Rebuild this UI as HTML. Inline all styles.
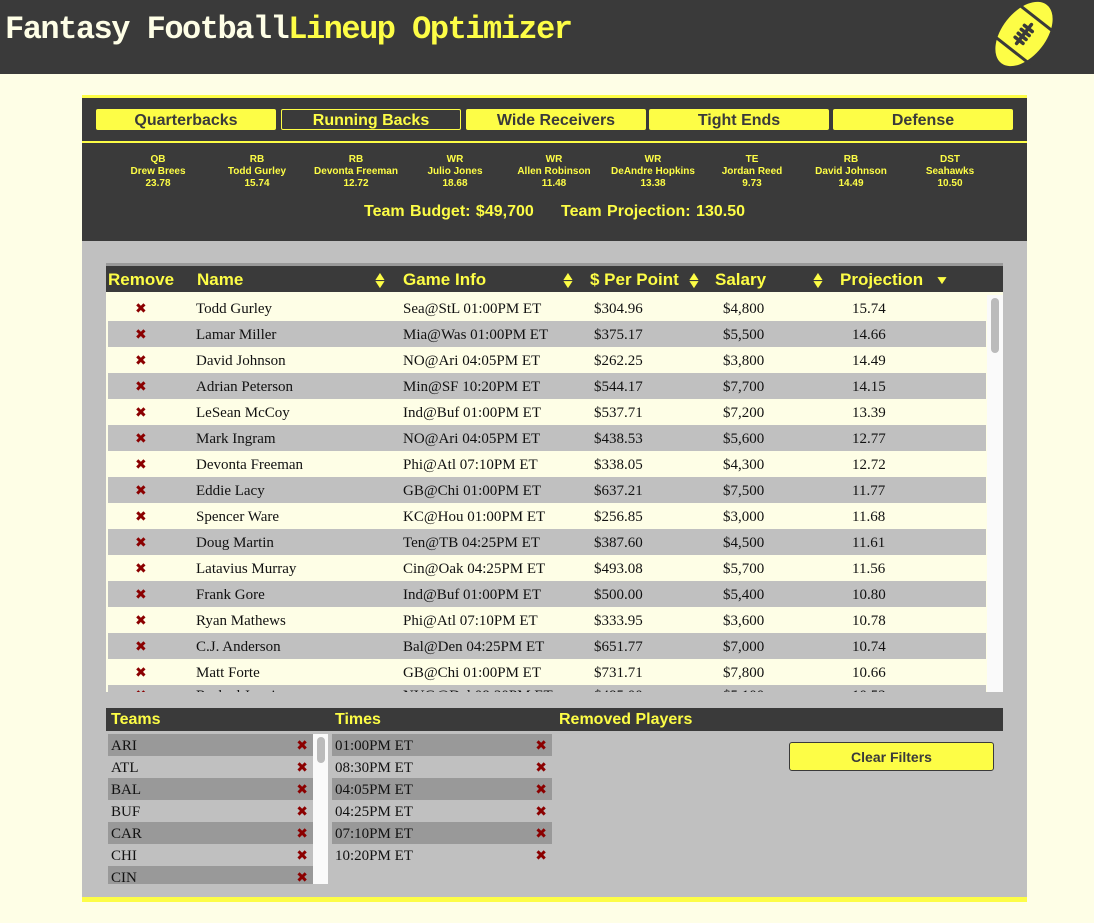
<!DOCTYPE html>
<html><head><meta charset="utf-8"><style>
*{margin:0;padding:0;box-sizing:border-box}
body{width:1094px;height:923px;background:#fefee6;position:relative;overflow:hidden;font-family:"Liberation Sans",sans-serif}
.abs{position:absolute}
#hdr{left:0;top:0;width:1094px;height:74px;background:#3a3a3a}
#title{left:5px;top:11px;font-family:"Liberation Mono",monospace;font-weight:bold;font-size:32px;letter-spacing:-1.5px;color:#fefee6;white-space:nowrap}
#title span{color:#fdfd46}
#main{left:82px;top:95px;width:945px;height:807px;background:#c0c0c0;border-top:3px solid #fdfd46;border-bottom:5px solid #fdfd46}
#dark{left:82px;top:98px;width:945px;height:143px;background:#3a3a3a}
.tab{top:109px;height:21px;width:180px;background:#fdfd46;color:#3a3a3a;font-weight:bold;font-size:16px;text-align:center;line-height:23px;border-radius:2px}
.tab.on{background:#3a3a3a;color:#fdfd46;border:1px solid #fdfd46;line-height:21px}
#line{left:82px;top:141px;width:945px;height:2px;background:#fdfd46}
.pl{top:154px;width:100px;text-align:center;color:#fdfd46;font-weight:bold;font-size:10px;line-height:12px;white-space:nowrap}
#tot{left:82px;top:203px;width:945px;text-align:center;color:#fdfd46;font-weight:bold;font-size:16px;word-spacing:1px}
#tbl{left:106px;top:263px;width:897px;height:429px;background:#fefee6;border-top:3px solid #999;overflow:hidden}
#th{left:0;top:0;width:897px;height:26px;background:#3a3a3a}
.h{top:4px;color:#fdfd46;font-weight:bold;font-size:17px}
.s{color:#fdfd46;font-size:12px;line-height:8px;transform:scaleX(1.3)}
.row{left:2px;width:878px;height:26px;font-family:"Liberation Serif",serif;font-size:15px;color:#111;line-height:28px}
.row.g{background:#c0c0c0}
.row span{position:absolute}
.x{color:#8b0000;font-weight:bold;font-family:"DejaVu Sans",sans-serif;font-size:14px}
#sb{left:881px;top:29px;width:16px;height:400px;background:#fafafa}
#sbt{left:885px;top:32px;width:8px;height:55px;background:#bbb;border-radius:4px}
#bh{left:106px;top:708px;width:897px;height:23px;background:#3a3a3a}
.bh{top:711px;color:#fdfd46;font-weight:bold;font-size:16px}
.li{height:22px;font-family:"Liberation Serif",serif;font-size:15px;line-height:24px;color:#111}
.li.d{background:#999}
.li span{position:absolute;left:3px}
.li b{position:absolute;right:5px;color:#8b0000;font-family:"DejaVu Sans",sans-serif;font-size:14px}
#btn{left:789px;top:742px;width:205px;height:29px;background:#fdfd46;border:1px solid #3a3a3a;border-radius:3px;text-align:center;line-height:29px;font-weight:bold;font-size:14px;color:#3a3a3a}
</style></head><body>
<div id="hdr" class="abs"></div>
<div id="title" class="abs">Fantasy Football<span>Lineup Optimizer</span></div>
<svg class="abs" style="left:988px;top:0px" width="72" height="68" viewBox="0 0 72 68">
<g transform="rotate(-52 36 34)">
<ellipse cx="36" cy="34" rx="37" ry="22" fill="#fdfd46"/>
<line x1="16" y1="10" x2="16" y2="58" stroke="#3a3a3a" stroke-width="3"/>
<line x1="56" y1="10" x2="56" y2="58" stroke="#3a3a3a" stroke-width="3"/>
<g stroke="#3a3a3a" stroke-width="3.5" stroke-linecap="round"><line x1="24" y1="34" x2="48" y2="34"/><line x1="28" y1="29" x2="28" y2="39"/><line x1="33" y1="29" x2="33" y2="39"/><line x1="38" y1="29" x2="38" y2="39"/><line x1="43" y1="29" x2="43" y2="39"/></g>
</g></svg>
<div id="main" class="abs"></div>
<div id="dark" class="abs"></div>
<div class="abs tab" style="left:96px">Quarterbacks</div>
<div class="abs tab on" style="left:281px">Running Backs</div>
<div class="abs tab" style="left:466px">Wide Receivers</div>
<div class="abs tab" style="left:649px">Tight Ends</div>
<div class="abs tab" style="left:833px">Defense</div>
<div id="line" class="abs"></div>
<div class="abs pl" style="left:108px">QB<br>Drew Brees<br>23.78</div>
<div class="abs pl" style="left:207px">RB<br>Todd Gurley<br>15.74</div>
<div class="abs pl" style="left:306px">RB<br>Devonta Freeman<br>12.72</div>
<div class="abs pl" style="left:405px">WR<br>Julio Jones<br>18.68</div>
<div class="abs pl" style="left:504px">WR<br>Allen Robinson<br>11.48</div>
<div class="abs pl" style="left:603px">WR<br>DeAndre Hopkins<br>13.38</div>
<div class="abs pl" style="left:702px">TE<br>Jordan Reed<br>9.73</div>
<div class="abs pl" style="left:801px">RB<br>David Johnson<br>14.49</div>
<div class="abs pl" style="left:900px">DST<br>Seahawks<br>10.50</div>
<div id="tot" class="abs">Team Budget: $49,700 &nbsp;&nbsp;&nbsp; Team Projection: 130.50</div>

<div id="tbl" class="abs">
<div id="th" class="abs"></div>
<div class="abs h" style="left:2px">Remove</div>
<div class="abs h" style="left:91px">Name</div><div class="abs s" style="left:268px;top:6px">▲<br>▼</div>
<div class="abs h" style="left:297px">Game Info</div><div class="abs s" style="left:456px;top:6px">▲<br>▼</div>
<div class="abs h" style="left:484px">$ Per Point</div><div class="abs s" style="left:582px;top:6px">▲<br>▼</div>
<div class="abs h" style="left:609px">Salary</div><div class="abs s" style="left:706px;top:6px">▲<br>▼</div>
<div class="abs h" style="left:734px">Projection</div><div class="abs s" style="left:830px;top:10px">▼</div>

<div class="abs row" style="top:29px"><span class="x" style="left:27px">✖</span><span style="left:88px">Todd Gurley</span><span style="left:295px">Sea@StL 01:00PM ET</span><span style="left:486px">$304.96</span><span style="left:615px">$4,800</span><span style="left:744px">15.74</span></div>
<div class="abs row g" style="top:55px"><span class="x" style="left:27px">✖</span><span style="left:88px">Lamar Miller</span><span style="left:295px">Mia@Was 01:00PM ET</span><span style="left:486px">$375.17</span><span style="left:615px">$5,500</span><span style="left:744px">14.66</span></div>
<div class="abs row" style="top:81px"><span class="x" style="left:27px">✖</span><span style="left:88px">David Johnson</span><span style="left:295px">NO@Ari 04:05PM ET</span><span style="left:486px">$262.25</span><span style="left:615px">$3,800</span><span style="left:744px">14.49</span></div>
<div class="abs row g" style="top:107px"><span class="x" style="left:27px">✖</span><span style="left:88px">Adrian Peterson</span><span style="left:295px">Min@SF 10:20PM ET</span><span style="left:486px">$544.17</span><span style="left:615px">$7,700</span><span style="left:744px">14.15</span></div>
<div class="abs row" style="top:133px"><span class="x" style="left:27px">✖</span><span style="left:88px">LeSean McCoy</span><span style="left:295px">Ind@Buf 01:00PM ET</span><span style="left:486px">$537.71</span><span style="left:615px">$7,200</span><span style="left:744px">13.39</span></div>
<div class="abs row g" style="top:159px"><span class="x" style="left:27px">✖</span><span style="left:88px">Mark Ingram</span><span style="left:295px">NO@Ari 04:05PM ET</span><span style="left:486px">$438.53</span><span style="left:615px">$5,600</span><span style="left:744px">12.77</span></div>
<div class="abs row" style="top:185px"><span class="x" style="left:27px">✖</span><span style="left:88px">Devonta Freeman</span><span style="left:295px">Phi@Atl 07:10PM ET</span><span style="left:486px">$338.05</span><span style="left:615px">$4,300</span><span style="left:744px">12.72</span></div>
<div class="abs row g" style="top:211px"><span class="x" style="left:27px">✖</span><span style="left:88px">Eddie Lacy</span><span style="left:295px">GB@Chi 01:00PM ET</span><span style="left:486px">$637.21</span><span style="left:615px">$7,500</span><span style="left:744px">11.77</span></div>
<div class="abs row" style="top:237px"><span class="x" style="left:27px">✖</span><span style="left:88px">Spencer Ware</span><span style="left:295px">KC@Hou 01:00PM ET</span><span style="left:486px">$256.85</span><span style="left:615px">$3,000</span><span style="left:744px">11.68</span></div>
<div class="abs row g" style="top:263px"><span class="x" style="left:27px">✖</span><span style="left:88px">Doug Martin</span><span style="left:295px">Ten@TB 04:25PM ET</span><span style="left:486px">$387.60</span><span style="left:615px">$4,500</span><span style="left:744px">11.61</span></div>
<div class="abs row" style="top:289px"><span class="x" style="left:27px">✖</span><span style="left:88px">Latavius Murray</span><span style="left:295px">Cin@Oak 04:25PM ET</span><span style="left:486px">$493.08</span><span style="left:615px">$5,700</span><span style="left:744px">11.56</span></div>
<div class="abs row g" style="top:315px"><span class="x" style="left:27px">✖</span><span style="left:88px">Frank Gore</span><span style="left:295px">Ind@Buf 01:00PM ET</span><span style="left:486px">$500.00</span><span style="left:615px">$5,400</span><span style="left:744px">10.80</span></div>
<div class="abs row" style="top:341px"><span class="x" style="left:27px">✖</span><span style="left:88px">Ryan Mathews</span><span style="left:295px">Phi@Atl 07:10PM ET</span><span style="left:486px">$333.95</span><span style="left:615px">$3,600</span><span style="left:744px">10.78</span></div>
<div class="abs row g" style="top:367px"><span class="x" style="left:27px">✖</span><span style="left:88px">C.J. Anderson</span><span style="left:295px">Bal@Den 04:25PM ET</span><span style="left:486px">$651.77</span><span style="left:615px">$7,000</span><span style="left:744px">10.74</span></div>
<div class="abs row" style="top:393px"><span class="x" style="left:27px">✖</span><span style="left:88px">Matt Forte</span><span style="left:295px">GB@Chi 01:00PM ET</span><span style="left:486px">$731.71</span><span style="left:615px">$7,800</span><span style="left:744px">10.66</span></div>
<div class="abs row g" style="top:419px;line-height:22px"><span class="x" style="left:27px">✖</span><span style="left:88px">Rashad Jennings</span><span style="left:295px">NYG@Dal 08:30PM ET</span><span style="left:486px">$485.00</span><span style="left:615px">$5,100</span><span style="left:744px">10.52</span></div>
<div id="sb" class="abs"></div><div id="sbt" class="abs"></div>
</div>

<div id="bh" class="abs"></div>
<div class="abs bh" style="left:111px">Teams</div>
<div class="abs bh" style="left:335px">Times</div>
<div class="abs bh" style="left:559px">Removed Players</div>

<div class="abs" style="left:108px;top:734px;width:205px;height:150px;overflow:hidden">
<div class="li d"><span>ARI</span><b>✖</b></div>
<div class="li"><span>ATL</span><b>✖</b></div>
<div class="li d"><span>BAL</span><b>✖</b></div>
<div class="li"><span>BUF</span><b>✖</b></div>
<div class="li d"><span>CAR</span><b>✖</b></div>
<div class="li"><span>CHI</span><b>✖</b></div>
<div class="li d"><span>CIN</span><b>✖</b></div>
</div>
<div class="abs" style="left:313px;top:734px;width:15px;height:150px;background:#fafafa"></div>
<div class="abs" style="left:317px;top:737px;width:8px;height:26px;background:#bbb;border-radius:4px"></div>

<div class="abs" style="left:332px;top:734px;width:220px">
<div class="li d"><span>01:00PM ET</span><b>✖</b></div>
<div class="li"><span>08:30PM ET</span><b>✖</b></div>
<div class="li d"><span>04:05PM ET</span><b>✖</b></div>
<div class="li"><span>04:25PM ET</span><b>✖</b></div>
<div class="li d"><span>07:10PM ET</span><b>✖</b></div>
<div class="li"><span>10:20PM ET</span><b>✖</b></div>
</div>
<div id="btn" class="abs">Clear Filters</div>
</body></html>
